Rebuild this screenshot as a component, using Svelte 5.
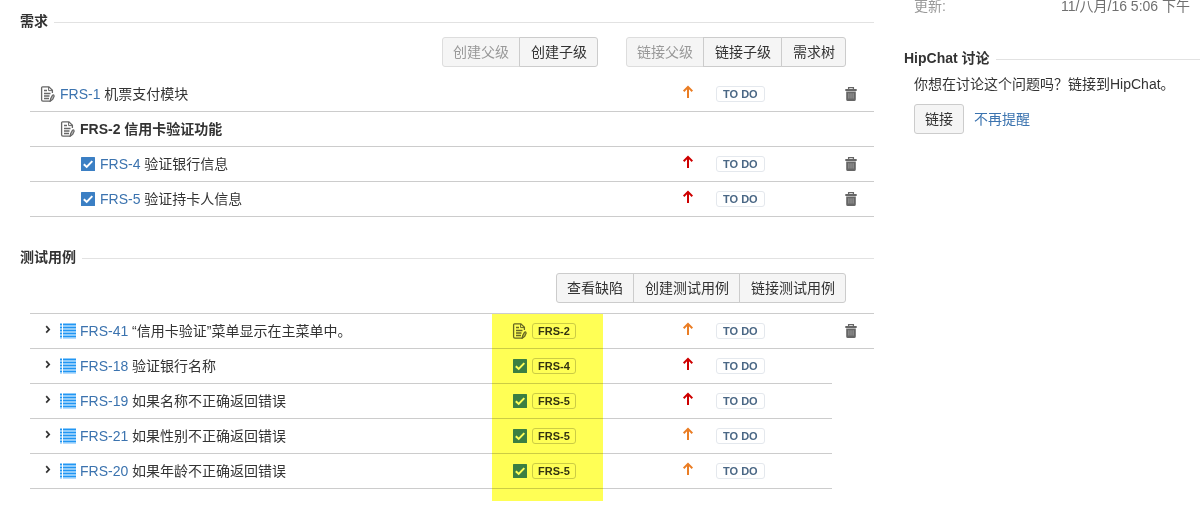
<script lang="ts">
    type IssueType = "doc" | "task";
    type Priority = "medium" | "high";

    interface Requirement {
        key: string;
        summary: string;
        type: IssueType;
        level: number;
        priority?: Priority;
        current?: boolean;
    }

    interface TestCase {
        key: string;
        summary: string;
        priority: Priority;
        requirement: string;
        requirementType: IssueType;
        removable: boolean;
    }

    const requirements: Requirement[] = [
        { key: "FRS-1", summary: "机票支付模块", type: "doc", level: 0, priority: "medium" },
        { key: "FRS-2", summary: "信用卡验证功能", type: "doc", level: 1, current: true },
        { key: "FRS-4", summary: "验证银行信息", type: "task", level: 2, priority: "high" },
        { key: "FRS-5", summary: "验证持卡人信息", type: "task", level: 2, priority: "high" },
    ];

    const testCases: TestCase[] = [
        { key: "FRS-41", summary: "“信用卡验证”菜单显示在主菜单中。", priority: "medium", requirement: "FRS-2", requirementType: "doc", removable: true },
        { key: "FRS-18", summary: "验证银行名称", priority: "high", requirement: "FRS-4", requirementType: "task", removable: false },
        { key: "FRS-19", summary: "如果名称不正确返回错误", priority: "high", requirement: "FRS-5", requirementType: "task", removable: false },
        { key: "FRS-21", summary: "如果性别不正确返回错误", priority: "medium", requirement: "FRS-5", requirementType: "task", removable: false },
        { key: "FRS-20", summary: "如果年龄不正确返回错误", priority: "medium", requirement: "FRS-5", requirementType: "task", removable: false },
    ];
</script>

{#snippet typeIcon(type: IssueType)}
    {#if type === "doc"}
        <svg class="icon" viewBox="0 0 16 16" fill="none" stroke="#666" stroke-width="1.3">
            <path d="M12.4 7V4.2L8.9.8H2.6q-1 0-1 1v12q0 1.3 1.3 1.3h7.6" />
            <path d="M8.6 1v3.6h3.6" stroke-width="1" />
            <path d="M4 4.5h3M4 7.5h6.5M4 10h5.5M4 12.5h5" />
            <path d="M10.2 15.2l.4-2.4 1.9-3.6q1.6-.9 1.6 1.2l-1.4 3z" fill="#bbb" stroke-width="1.2" />
        </svg>
    {:else}
        <svg class="icon" viewBox="0 0 16 16">
            <rect x="1" y="1" width="14" height="14" rx="0.5" fill="#3b7fc4" />
            <path d="M3.8 8.2l2.9 2.7 5.6-5.8" fill="none" stroke="#fff" stroke-width="2" />
        </svg>
    {/if}
{/snippet}

{#snippet priorityIcon(priority: Priority)}
    <svg class="arrow {priority}" viewBox="0 0 12 14">
        <path d="M6 13V2M1.7 6.2L6 1.9l4.3 4.3" fill="none" stroke="currentColor" stroke-width="2" />
    </svg>
{/snippet}

{#snippet trashButton()}
    <button class="plain" aria-label="删除">
        <svg class="icon" viewBox="0 0 16 16">
            <path d="M5.6 3V1.7h4.8V3" fill="none" stroke="#666" stroke-width="1.3" />
            <path d="M2.3 3h11.4v2H2.3zM3.2 5.6h9.6v7.8q0 1.6-1.6 1.6H4.8q-1.6 0-1.6-1.6z" fill="#666" />
            <path d="M5.9 7.2v5.4M8 7.2v5.4M10.1 7.2v5.4" stroke="#a5a5a5" stroke-width="0.9" />
        </svg>
    </button>
{/snippet}

<div class="page">
    <main>
        <section>
            <h2>需求</h2>
            <div class="toolbar">
                <div class="group">
                    <button disabled>创建父级</button>
                    <button>创建子级</button>
                </div>
                <div class="group">
                    <button disabled>链接父级</button>
                    <button>链接子级</button>
                    <button>需求树</button>
                </div>
            </div>
            <div class="list">
                <table>
                    <colgroup>
                        <col />
                        <col class="col-priority" />
                        <col class="col-status" />
                        <col class="col-actions" />
                    </colgroup>
                    <tbody>
                        {#each requirements as item}
                            <tr class:current={item.current}>
                                <td>
                                    <div class="issue" style="padding-left: {10 + item.level * 20}px">
                                        {@render typeIcon(item.type)}
                                        {#if item.current}
                                            <span>{item.key} {item.summary}</span>
                                        {:else}
                                            <span><a href="#{item.key}">{item.key}</a> {item.summary}</span>
                                        {/if}
                                    </div>
                                </td>
                                <td>{#if item.priority}{@render priorityIcon(item.priority)}{/if}</td>
                                <td>{#if item.priority}<span class="lozenge">TO DO</span>{/if}</td>
                                <td class="actions">{#if item.priority}{@render trashButton()}{/if}</td>
                            </tr>
                        {/each}
                    </tbody>
                </table>
            </div>
        </section>

        <section>
            <h2>测试用例</h2>
            <div class="toolbar">
                <div class="group">
                    <button>查看缺陷</button>
                    <button>创建测试用例</button>
                    <button>链接测试用例</button>
                </div>
            </div>
            <div class="list ruled">
                <table>
                    <colgroup>
                        <col />
                        <col class="col-requirement" />
                        <col class="col-priority" />
                        <col class="col-status" />
                        <col class="col-actions" />
                    </colgroup>
                    <tbody>
                        {#each testCases as test}
                            <tr>
                                <td>
                                    <div class="issue test">
                                        <button class="plain" aria-label="展开">
                                            <svg class="icon" viewBox="0 0 16 16">
                                                <path d="M6.2 3.2l3 3.2-3 3.2" fill="none" stroke="#333" stroke-width="1.7" />
                                            </svg>
                                        </button>
                                        <svg class="icon" viewBox="0 0 16 16">
                                            <path d="M0 0h2v16H0zM3 0h13v16H3z" fill="#b5dcfd" />
                                            <path d="M0 1.5h2M0 4.5h2M0 7.5h2M0 10.5h2M0 13.5h2M3 1.5h13M3 4.5h13M3 7.5h13M3 10.5h13M3 13.5h13" stroke="#2196f3" stroke-width="1.4" />
                                        </svg>
                                        <span><a href="#{test.key}">{test.key}</a> {test.summary}</span>
                                    </div>
                                </td>
                                <td>
                                    <div class="issue">
                                        {@render typeIcon(test.requirementType)}
                                        <a class="lozenge key" href="#{test.requirement}">{test.requirement}</a>
                                    </div>
                                </td>
                                <td>{@render priorityIcon(test.priority)}</td>
                                <td><span class="lozenge">TO DO</span></td>
                                {#if test.removable}
                                    <td class="actions">{@render trashButton()}</td>
                                {/if}
                            </tr>
                        {/each}
                    </tbody>
                </table>
                <!-- marker over the requirement column -->
                <div class="highlight"></div>
            </div>
        </section>
    </main>

    <aside>
        <dl>
            <dt>更新:</dt>
            <dd>11/八月/16 5:06 下午</dd>
        </dl>
        <h2>HipChat 讨论</h2>
        <p>你想在讨论这个问题吗？链接到HipChat。</p>
        <div class="hipchat">
            <button>链接</button>
            <a href="#dismiss">不再提醒</a>
        </div>
    </aside>
</div>

<style>
    :global(body) {
        background: #fff;
    }

    .page {
        display: flex;
        gap: 30px;
        padding-left: 20px;
        color: #333;
        font: 14px/20px "Liberation Sans", "Noto Sans CJK SC", sans-serif;
    }

    main {
        flex: 1;
        min-width: 0;
        padding-top: 11px;
    }

    section {
        margin-bottom: 30px;
    }

    h2 {
        display: flex;
        align-items: center;
        gap: 6px;
        margin: 0;
        font-size: 14px;
        line-height: 20px;
    }

    h2::after {
        content: "";
        flex: 1;
        margin-top: 2px;
        border-top: 1px solid #e2e2e2;
    }

    .toolbar {
        display: flex;
        justify-content: flex-end;
        gap: 28px;
        padding: 6px 28px 10px 0;
    }

    .group {
        display: flex;
    }

    button {
        height: 30px;
        padding: 0 10px;
        border: 1px solid #ccc;
        border-radius: 3px;
        background: #f5f5f5;
        color: #333;
        font: inherit;
        white-space: nowrap;
    }

    button:disabled {
        border-color: #ddd;
        color: #999;
    }

    .group button {
        border-radius: 0;
    }

    .group button + button {
        margin-left: -1px;
        padding-left: 11px;
    }

    .group button:first-child {
        border-radius: 3px 0 0 3px;
    }

    .group button:last-child {
        border-radius: 0 3px 3px 0;
    }

    button.plain {
        display: block;
        height: 16px;
        padding: 0;
        border: 0;
        background: none;
    }

    a {
        color: #3b73af;
        text-decoration: none;
    }

    .list {
        position: relative;
        margin-left: 10px;
    }

    .ruled {
        border-top: 1px solid #ccc;
    }

    table {
        width: 100%;
        table-layout: fixed;
        border-spacing: 0;
    }

    td {
        height: 34px;
        padding: 0;
        border-bottom: 1px solid #ccc;
        vertical-align: middle;
    }

    .col-requirement {
        width: 170px;
    }

    .col-priority {
        width: 34px;
    }

    .col-status {
        width: 116px;
    }

    .col-actions {
        width: 42px;
    }

    .actions {
        padding-left: 11px;
    }

    .current {
        font-weight: bold;
    }

    .issue {
        display: flex;
        align-items: center;
        gap: 4px;
        white-space: nowrap;
    }

    .test {
        padding-left: 10px;
    }

    .icon {
        display: block;
        flex: none;
        width: 16px;
        height: 16px;
    }

    .arrow {
        display: block;
        width: 12px;
        height: 14px;
        margin-bottom: 4px;
    }

    .medium {
        color: #ea7d24;
    }

    .high {
        color: #ce0000;
    }

    .lozenge {
        display: block;
        width: fit-content;
        padding: 0 6px;
        border: 1px solid #e4e8ed;
        border-radius: 3px;
        color: #4a6785;
        font-size: 11px;
        font-weight: bold;
        line-height: 14px;
    }

    .key {
        padding: 0 5px;
        border-color: #ccc;
        color: #333;
    }

    .highlight {
        position: absolute;
        top: 0;
        right: 271px;
        bottom: -12px;
        width: 111px;
        background: #ff5;
        mix-blend-mode: multiply;
        pointer-events: none;
    }

    aside {
        width: 296px;
    }

    dl {
        display: flex;
        justify-content: space-between;
        height: 16px;
        margin: 0 0 32px;
        padding: 0 10px;
        line-height: 12px;
    }

    dt {
        color: #999;
    }

    dd {
        margin: 0;
        color: #707070;
    }

    p {
        margin: 6px 10px 10px;
    }

    .hipchat {
        display: flex;
        align-items: center;
        gap: 10px;
        padding: 0 10px;
    }
</style>
